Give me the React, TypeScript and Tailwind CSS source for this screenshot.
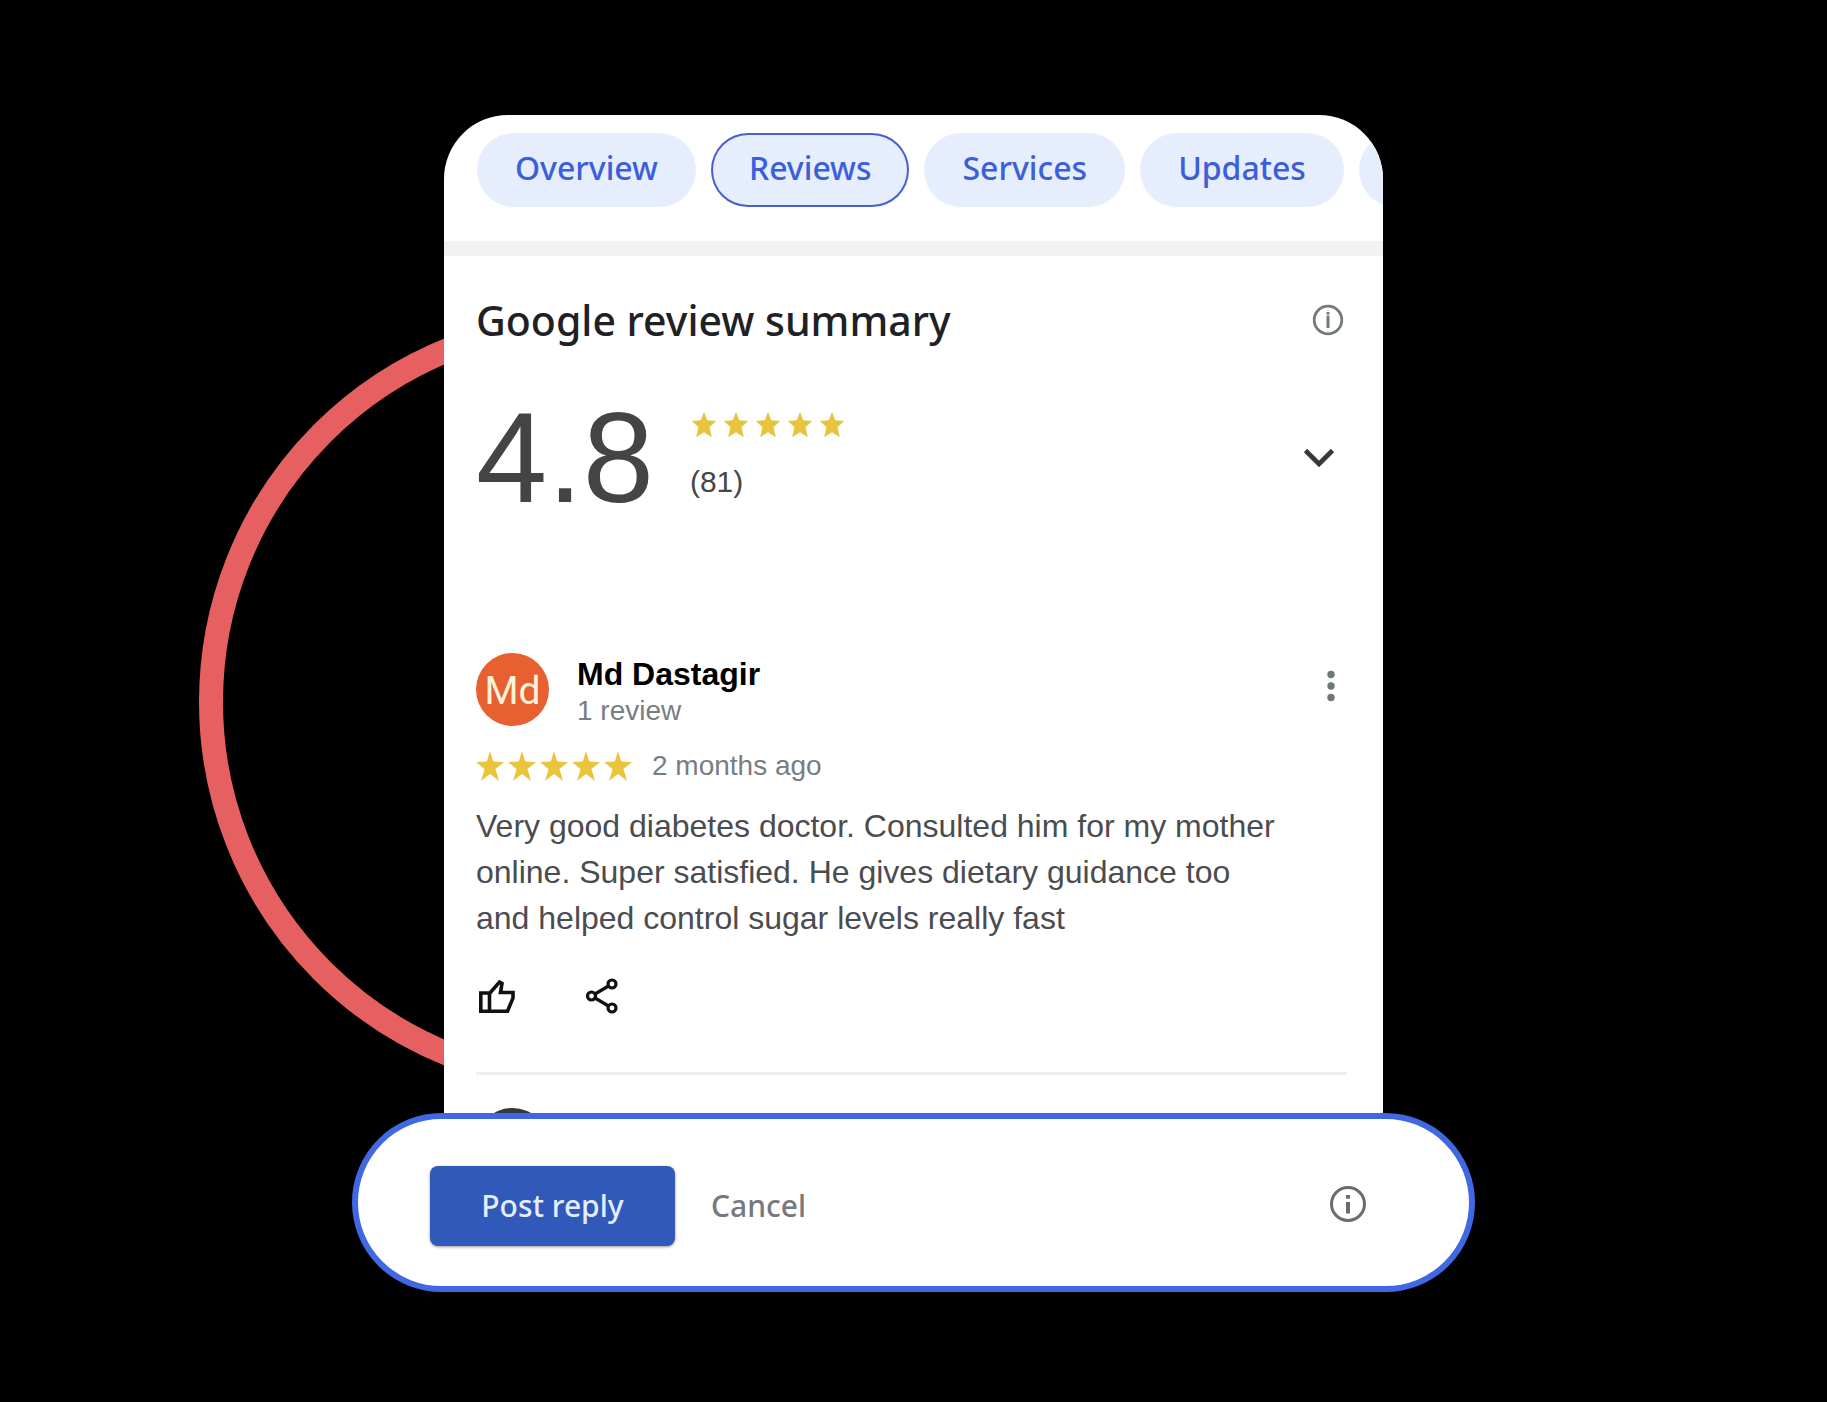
type StarsProps = {
  starClass: string;
  points: string;
};

const tabs = ["Overview", "Reviews", "Services", "Updates"];

const Stars = ({ starClass, points }: StarsProps) => (
  <div role="img" aria-label="Rated 5 out of 5" className="flex gap-1">
    {[1, 2, 3, 4, 5].map((star) => (
      <svg key={star} viewBox="0 0 28 30" className={starClass}>
        <polygon points={points} fill="#e9c440" />
      </svg>
    ))}
  </div>
);

const App = () => {
  return (
    <main className="min-h-screen flex justify-center items-start bg-black pt-[115px] pb-[108px]">
      <div className="w-full max-w-[1123px]">
        <section className="relative isolate mx-[92px]">
          {/* Ring peeking out behind the card */}
          <div className="absolute -z-10 -left-[245px] top-[195px] size-[784px] rounded-full border-[24px] border-[#e65f61]" />

          <div className="overflow-hidden rounded-t-[64px] bg-white">
            <nav className="flex gap-[15px] pt-[18px] pl-[33px] overflow-hidden font-['Noto_Sans',sans-serif]">
              {tabs.map((tab) => (
                <button
                  key={tab}
                  type="button"
                  className={`h-[74px] shrink-0 px-[38px] pb-1 rounded-full text-[32px] leading-10 font-medium text-[#3b5fdb] bg-[#e6edfd] ${
                    tab === "Reviews" ? "ring-2 ring-inset ring-[#4a5fd0]" : ""
                  }`}
                >
                  {tab}
                </button>
              ))}
              <span className="h-[74px] w-[180px] shrink-0 rounded-full bg-[#e6edfd]" />
            </nav>

            <div className="mt-[34px] h-[15px] bg-[#f1f2f4]" />

            <div className="pl-8 pr-9 pt-9">
              <div className="flex items-center justify-between">
                <h1 className="font-['Noto_Sans',sans-serif] text-[41px] leading-[56px] font-medium text-[#202124]">
                  Google review summary
                </h1>
                <button type="button" aria-label="About this summary">
                  <svg viewBox="0 0 36 36" className="size-9" fill="none" stroke="#74797c">
                    <circle cx="17" cy="18" r="13.800" strokeWidth="2.800" />
                    <path d="M17 10v2.500M17 13.500v12.500" strokeWidth="3" />
                  </svg>
                </button>
              </div>

              <div className="mt-[46px] flex items-center font-['Liberation_Sans',sans-serif]">
                <p className="text-[128px] leading-[128px] text-[#444447]">4.8</p>
                <div className="ml-9 self-start pt-[18px]">
                  <Stars
                    starClass="w-7 h-[26px]"
                    points="14,0 17.800,9.500 28,10.500 20.500,17.500 23,29 14,23.500 5,29 7.500,17.500 0,10.500 10.200,9.500"
                  />
                  <p className="mt-6 text-[30px] leading-10 text-[#444746]">(81)</p>
                </div>
                <button type="button" aria-label="Show rating breakdown" className="ml-auto mr-[10px]">
                  <svg viewBox="0 0 36 36" className="size-9" fill="none" stroke="#38383b">
                    <path d="M4.500 10.500 18 24 31.500 10.500" strokeWidth="4.600" />
                  </svg>
                </button>
              </div>

              <article className="mt-[131px] font-['Liberation_Sans',sans-serif]">
                <header className="flex items-start">
                  <div className="flex size-[73px] items-center justify-center rounded-full bg-[#e8602f] pt-1 font-['Roboto',sans-serif] text-[39px] text-[#fdf3da]">
                    Md
                  </div>
                  <div className="ml-7">
                    <h2 className="text-[32px] leading-[42px] font-bold text-black">Md Dastagir</h2>
                    <p className="text-[28px] leading-8 text-[#7a7d80]">1 review</p>
                  </div>
                  <button type="button" aria-label="More options" className="ml-auto">
                    <svg viewBox="0 0 36 68" className="w-9 h-[68px]" fill="#70777a">
                      <circle cx="20" cy="21.500" r="3.700" />
                      <circle cx="20" cy="33" r="3.700" />
                      <circle cx="20" cy="44.500" r="3.700" />
                    </svg>
                  </button>
                </header>

                <div className="mt-[23px] flex h-8 items-center">
                  <Stars
                    starClass="w-7 h-[30px]"
                    points="14,0 17.200,10.500 28,11 19.500,18 23,30 14,23 5,30 8.500,18 0,11 10.800,10.500"
                  />
                  <p className="ml-5 text-[28px] leading-8 text-[#7a7d80]">2 months ago</p>
                </div>

                <p className="mt-[21px] max-w-[812px] text-[32px] leading-[46px] text-[#4a4c50]">
                  Very good diabetes doctor. Consulted him for my mother online. Super satisfied. He gives
                  dietary guidance too and helped control sugar levels really fast
                </p>

                <div className="mt-[37px] flex gap-[68px]">
                  <button type="button" aria-label="Like">
                    <svg viewBox="0 0 40 36" className="w-10 h-9" fill="none" stroke="#111" strokeWidth="3.600">
                      <path d="M4.800 15H14L23.500 4 26 5.500 24.500 14.500H37V20L31.500 33.300H4.800Z" />
                      <path d="M13.500 15v18" />
                    </svg>
                  </button>
                  <button type="button" aria-label="Share">
                    <svg viewBox="0 0 36 36" className="size-9" fill="none" stroke="#111" strokeWidth="3.200">
                      <path d="M11 16 24.500 8M11 20 24.500 28" />
                      <circle cx="7.500" cy="18" r="4" />
                      <circle cx="28" cy="6" r="4" />
                      <circle cx="28" cy="30" r="4" />
                    </svg>
                  </button>
                </div>
              </article>

              <hr className="mt-[58px] border-t-[3px] border-[#eff0f3]" />

              {/* Top of the next reviewer's avatar */}
              <div className="mt-[33px] h-[5px] overflow-hidden">
                <div className="size-[73px] rounded-full bg-[#33373f]" />
              </div>
            </div>
          </div>
        </section>

        <section className="flex items-center rounded-full border-[6px] border-[#4068e2] bg-white pt-[47px] pb-10 pl-[72px] pr-[99px] font-['Noto_Sans',sans-serif] text-[30px] leading-10 font-medium">
          <button
            type="button"
            className="h-20 w-[245px] rounded-lg bg-[#3059b9] text-[#e4edff] shadow-[0_1px_3px_rgb(0,0,0,0.4)]"
          >
            Post reply
          </button>
          <button type="button" className="ml-9 text-[#77797c]">
            Cancel
          </button>
          <button type="button" aria-label="Reply guidelines" className="ml-auto">
            <svg viewBox="0 0 44 44" className="size-11" fill="none" stroke="#696c6e">
              <circle cx="22" cy="20" r="16.500" strokeWidth="3" />
              <path d="M22 18v11.500M22 11v3.800" strokeWidth="4" />
            </svg>
          </button>
        </section>
      </div>
    </main>
  );
};

export default App;
